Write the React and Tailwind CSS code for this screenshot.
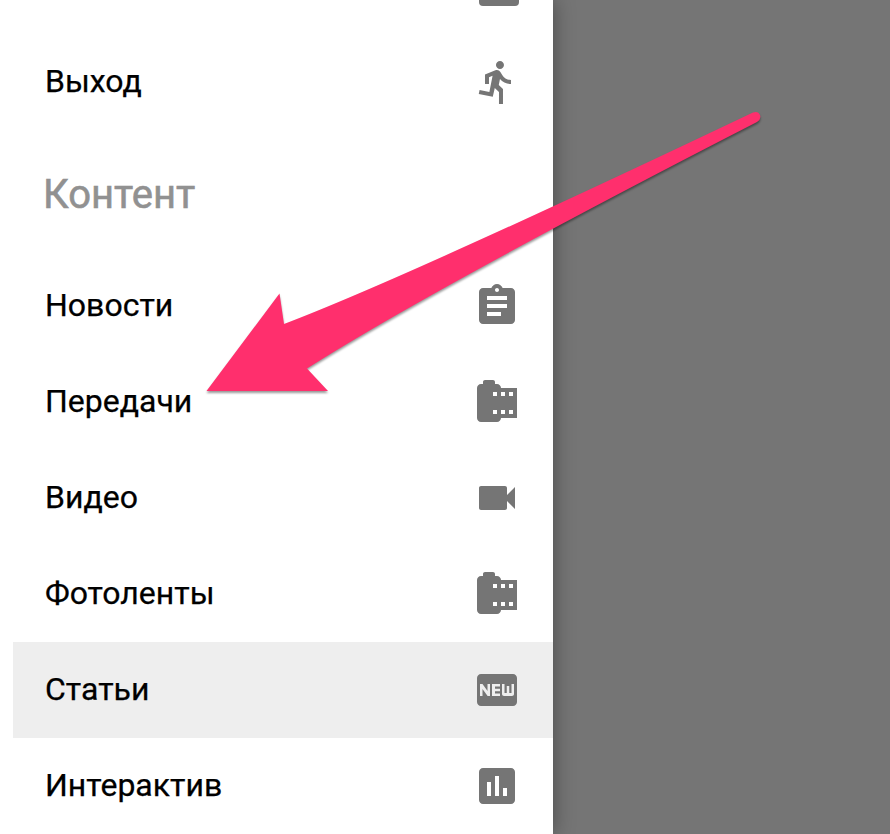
import { MdDirectionsRun, MdAssignment, MdCameraRoll, MdVideocam, MdFiberNew, MdAssessment } from "react-icons/md";

const items = [
  { label: "Новости", Icon: MdAssignment },
  { label: "Передачи", Icon: MdCameraRoll },
  { label: "Видео", Icon: MdVideocam },
  { label: "Фотоленты", Icon: MdCameraRoll },
  { label: "Статьи", Icon: MdFiberNew, active: true },
  { label: "Интерактив", Icon: MdAssessment },
];

function Row({ label, Icon, active }) {
  return (
    <li className={`ml-[13px] flex h-24 shrink-0 items-center justify-between px-8 ${active ? "bg-[#eeeeee]" : ""}`}>
      <span className="pb-[3px] text-[32px] leading-none text-black [-webkit-text-stroke:0.25px_black]">{label}</span>
      <Icon className="size-12 text-[#757575]" />
    </li>
  );
}

export default function App() {
  return (
    <div className="relative flex h-[834px] w-[890px] overflow-hidden bg-[#757575] font-['Roboto',sans-serif]">
      <nav className="w-[553px] shrink-0 bg-white shadow-[0_0_20px_rgba(0,0,0,0.38)]">
        <div className="flex h-[34px] items-start justify-end pr-[34px]">
          <div className="h-[6px] w-10 rounded-b-[4px] bg-[#757575]" />
        </div>
        <ul><Row label="Выход" Icon={MdDirectionsRun} /></ul>
        <h2 className="flex h-32 items-center pt-[2px] pl-[43px] text-[40px] leading-none text-[#919191] [-webkit-text-stroke:0.6px_#919191]">Контент</h2>
        <ul>{items.map((it) => <Row key={it.label} {...it} />)}</ul>
      </nav>
      <svg className="pointer-events-none absolute inset-0 h-full w-full drop-shadow-[0_2px_1px_rgba(0,0,0,0.4)]" viewBox="0 0 890 834">
        <path fill="#ff2f6d" d="M206.5 391 L279.5 293.5 L284 324 Q406 277.500 753 112.500 Q758 110.500 760 115 Q761.500 119 757 122 Q430 290 307 368.500 L328 391 Z" />
      </svg>
    </div>
  );
}
